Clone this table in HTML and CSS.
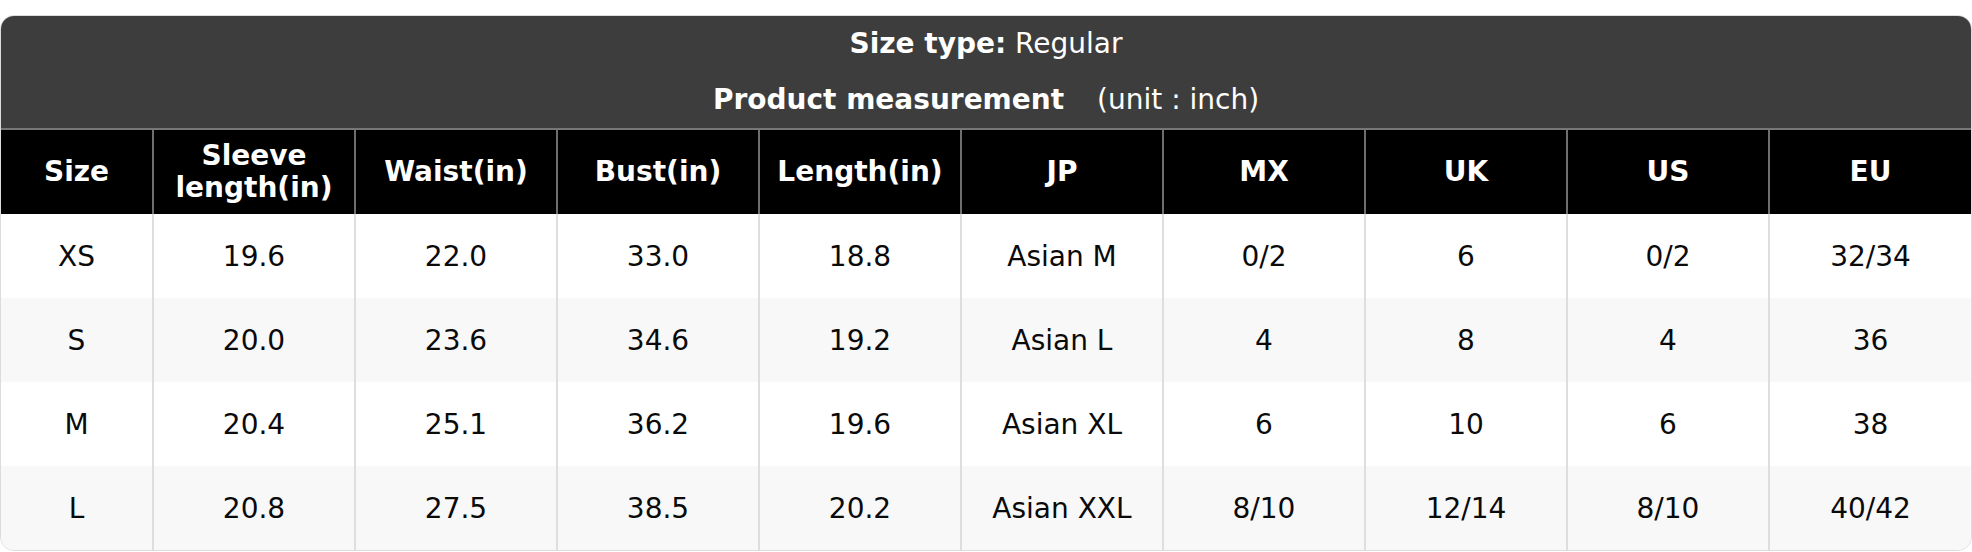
FILE: index.html
```html
<!DOCTYPE html>
<html>
<head>
<meta charset="utf-8">
<link rel="stylesheet" href="styles.css">
</head>
<body>
<div class="chart">
  <div class="chart-head">
    <div class="head-line"><b>Size type:</b> Regular</div>
    <div class="head-line"><b>Product measurement</b><span class="unit">(unit : inch)</span></div>
  </div>
  <table class="size-table">
    <colgroup>
      <col class="col-first">
      <col><col><col><col><col><col><col><col><col>
    </colgroup>
    <thead>
      <tr>
        <th>Size</th>
        <th>Sleeve<br>length(in)</th>
        <th>Waist(in)</th>
        <th>Bust(in)</th>
        <th>Length(in)</th>
        <th>JP</th>
        <th>MX</th>
        <th>UK</th>
        <th>US</th>
        <th>EU</th>
      </tr>
    </thead>
    <tbody>
      <tr><td>XS</td><td>19.6</td><td>22.0</td><td>33.0</td><td>18.8</td><td>Asian M</td><td>0/2</td><td>6</td><td>0/2</td><td>32/34</td></tr>
      <tr><td>S</td><td>20.0</td><td>23.6</td><td>34.6</td><td>19.2</td><td>Asian L</td><td>4</td><td>8</td><td>4</td><td>36</td></tr>
      <tr><td>M</td><td>20.4</td><td>25.1</td><td>36.2</td><td>19.6</td><td>Asian XL</td><td>6</td><td>10</td><td>6</td><td>38</td></tr>
      <tr><td>L</td><td>20.8</td><td>27.5</td><td>38.5</td><td>20.2</td><td>Asian XXL</td><td>8/10</td><td>12/14</td><td>8/10</td><td>40/42</td></tr>
    </tbody>
  </table>
</div>
</body>
</html>
```

FILE: styles.css
```css
html, body {
  margin: 0;
  padding: 0;
  background: #ffffff;
}

body {
  padding-top: 15px;
  font-family: "DejaVu Sans", Verdana, sans-serif;
}

.chart {
  border: 1px solid #dcdcdc;
  border-radius: 14px;
  overflow: hidden;
  background: #ffffff;
}

.chart-head {
  background: #3d3d3d;
  color: #ffffff;
  border-bottom: 2px solid #777777;
}

.head-line {
  height: 56px;
  line-height: 56px;
  text-align: center;
  font-size: 28px;
  white-space: nowrap;
}

.head-line b {
  font-weight: bold;
}

.unit {
  display: inline-block;
  margin-left: 33px;
}

.size-table {
  width: 100%;
  border-collapse: collapse;
  table-layout: fixed;
}

.col-first {
  width: 152px;
}

.size-table th {
  background: #000000;
  color: #ffffff;
  font-weight: bold;
  font-size: 28px;
  line-height: 32px;
  height: 84px;
  padding: 0 4px;
  text-align: center;
  vertical-align: middle;
  border-left: 2px solid #6e6e6e;
}

.size-table td {
  color: #0a0a0a;
  font-size: 28px;
  height: 84px;
  padding: 0 4px;
  text-align: center;
  vertical-align: middle;
  border-left: 2px solid #dedede;
}

.size-table th:first-child,
.size-table td:first-child {
  border-left: none;
}

.size-table tbody tr:nth-child(even) td {
  background: #f8f8f8;
}
```
